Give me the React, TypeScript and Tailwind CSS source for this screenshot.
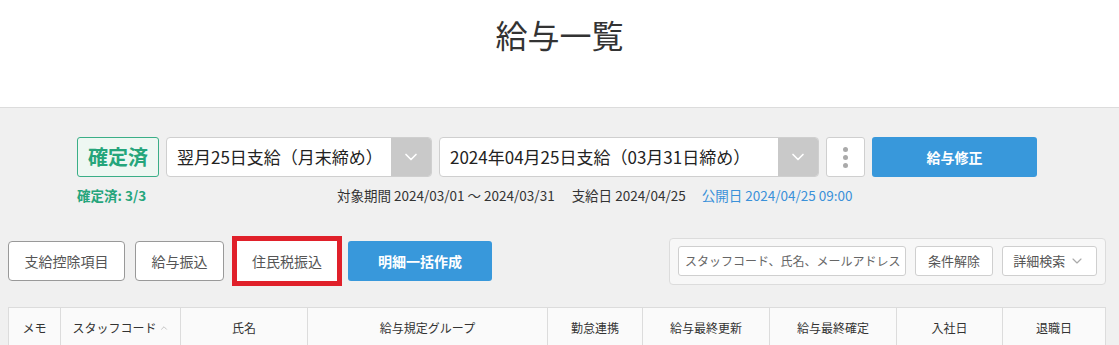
import { ChevronDown, ChevronUp } from "lucide-react";

const columns = [
  { label: "メモ", w: "w-[51px]" },
  { label: "スタッフコード", w: "w-[120px]", sort: true },
  { label: "氏名", w: "w-[127px]" },
  { label: "給与規定グループ", w: "w-[240px]" },
  { label: "勤怠連携", w: "w-[95px]" },
  { label: "給与最終更新", w: "w-[127px]" },
  { label: "給与最終確定", w: "w-[127px]" },
  { label: "入社日", w: "w-[106px]" },
  { label: "退職日", w: "flex-1" },
];

function Select({ label, className }: { label: string; className: string }) {
  return (
    <div className={`flex h-[40px] overflow-hidden rounded-[4px] border border-[#cfcfcf] bg-white ${className}`}>
      <div className="flex flex-1 items-center pl-[10px] text-[17px] text-[#222] whitespace-nowrap">
        {label}
      </div>
      <div className="flex w-[40px] items-center justify-center bg-[#c9c9c9]">
        <ChevronDown className="size-[20px] text-white" strokeWidth={2} />
      </div>
    </div>
  );
}

function GrayButton({ label, className = "" }: { label: string; className?: string }) {
  return (
    <button className={`flex h-[40px] items-center justify-center rounded-[4px] border border-[#999] bg-white text-[14px] text-[#555] ${className}`}>
      {label}
    </button>
  );
}

export default function App() {
  return (
    <div className="min-h-[345px] bg-[#f0f0f0] font-['Noto_Sans_CJK_JP','Noto_Sans',sans-serif] text-[#333]">
      <header className="flex h-[108px] justify-center border-b border-[#dcdcdc] bg-white pt-[12px]">
        <h1 className="text-[32px] leading-[44px] text-[#333]">給与一覧</h1>
      </header>

      <div className="flex items-center gap-[7px] pl-[77px] pt-[29px]">
        <div className="flex h-[40px] w-[82px] items-center justify-center rounded-[3px] border border-[#3aae87] bg-[#eef7f2] text-[20px] font-bold text-[#25a57b]">
          確定済
        </div>
        <Select label="翌月25日支給（月末締め）" className="w-[266px]" />
        <Select label="2024年04月25日支給（03月31日締め）" className="w-[380px]" />
        <button className="flex h-[40px] w-[39px] flex-col items-center justify-center gap-[3px] rounded-[3px] border border-[#cfcfcf] bg-white">
          <span className="size-[5px] rounded-full bg-[#aaa]" />
          <span className="size-[5px] rounded-full bg-[#aaa]" />
          <span className="size-[5px] rounded-full bg-[#aaa]" />
        </button>
        <button className="h-[40px] w-[165px] rounded-[3px] bg-[#3898db] text-[14px] font-bold text-white">
          給与修正
        </button>
      </div>

      <div className="flex items-center pt-[9px] text-[13.5px] leading-[18px]">
        <span className="w-[337px] pl-[77px] font-bold text-[#25a57b]">確定済: 3/3</span>
        <span className="text-[#333]">対象期間 2024/03/01 〜 2024/03/31</span>
        <span className="ml-[17px] text-[#333]">支給日 2024/04/25</span>
        <span className="ml-[16px] text-[#3a91d9]">公開日 2024/04/25 09:00</span>
      </div>

      <div className="flex items-center justify-between pl-[8px] pr-[13px] pt-[32px]">
        <div className="flex items-center">
          <GrayButton label="支給控除項目" className="w-[117px]" />
          <GrayButton label="給与振込" className="ml-[10px] w-[89px]" />
          <div className="ml-[8px] border-[5px] border-[#e0202a] bg-white">
            <GrayButton label="住民税振込" className="h-[39px] w-[100px] rounded-none border-0" />
          </div>
          <button className="ml-[6px] h-[40px] w-[144px] rounded-[3px] bg-[#3898db] text-[14px] font-bold text-white">
            明細一括作成
          </button>
        </div>
        <div className="flex h-[47px] w-[437px] items-center gap-[9px] rounded-[4px] border border-[#dcdcdc] bg-[#f7f7f7] px-[8px]">
          <div className="flex h-[30px] w-[230px] items-center overflow-hidden rounded-[3px] border border-[#cfcfcf] bg-white px-[6px] text-[12px] text-[#666] whitespace-nowrap">
            スタッフコード、氏名、メールアドレス
          </div>
          <button className="h-[30px] w-[78px] rounded-[3px] border border-[#cfcfcf] bg-white text-[13px] text-[#555]">
            条件解除
          </button>
          <button className="flex h-[30px] w-[96px] items-center justify-center gap-[4px] rounded-[3px] border border-[#cfcfcf] bg-white text-[13px] text-[#555]">
            詳細検索
            <ChevronDown className="size-[16px] text-[#aaa]" strokeWidth={1.75} />
          </button>
        </div>
      </div>

      <div className="ml-[8px] mr-[13px] mt-[21px] flex border border-[#dcdcdc] bg-[#fafafa]">
        {columns.map((c, i) => (
          <div
            key={c.label}
            className={`flex h-[40px] items-center justify-center text-[12px] text-[#333] ${c.w} ${i > 0 ? "border-l border-[#dcdcdc]" : ""}`}
          >
            {c.label}
            {c.sort && <ChevronUp className="ml-[2px] size-[10px] text-[#bbb]" strokeWidth={2} />}
          </div>
        ))}
      </div>
    </div>
  );
}
